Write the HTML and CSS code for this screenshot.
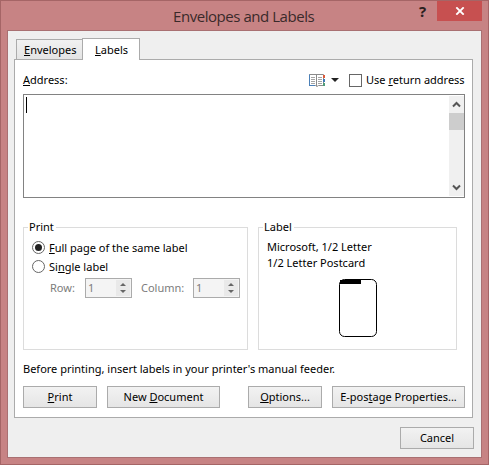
FILE: index.html
```
<!DOCTYPE html>
<html lang="en">
<head>
    <meta charset="UTF-8">
    <meta name="viewport" content="width=device-width, initial-scale=1.0">
    <link rel="stylesheet" href="styles.css">
    <title>Envelopes and Labels</title>
</head>
<body>
    <div class="window">
        <div class="titlebar">
            <span class="title">Envelopes and Labels</span>
            <span class="help">?</span>
            <div class="close">
                <svg width="10" height="8" viewBox="0 0 10 8"><path d="M1.3 0.3L8.7 7.7M8.7 0.3L1.3 7.7" stroke="#fff" stroke-width="1.8" fill="none"/></svg>
            </div>
        </div>

        <div class="client">
            <div class="tabs">
                <div class="tab"><span><u>E</u>nvelopes</span></div>
                <div class="tab active"><span><u>L</u>abels</span></div>
            </div>

            <div class="panel">
                <div class="address-row">
                    <span class="address-label"><u>A</u>ddress:</span>
                    <svg class="book" width="17" height="13" viewBox="0 0 17 13">
                        <path d="M0.5 0.5H14.5V11.5H9.5L8 12.5L6.5 11.5H0.5Z" fill="#fff" stroke="#8b8b8b"/>
                        <path d="M0.5 12V0.5M0 11.5H6" stroke="#4a80b8" fill="none"/>
                        <path d="M7.5 1V12" stroke="#8b8b8b"/>
                        <path d="M2 3.5H6M2 5.5H6M2 7.5H6M2 9.5H6M9 3.5H13M9 5.5H13M9 7.5H13M9 9.5H13" stroke="#a5a5a5"/>
                        <path d="M14 1H16V4H14Z" fill="#dc5b3b"/>
                        <path d="M14 5H16V8H14Z" fill="#3f78b5"/>
                        <path d="M14 9H16V12H14Z" fill="#4f9d78"/>
                    </svg>
                    <svg class="drop" width="8" height="4" viewBox="0 0 8 4"><path d="M0 0H8L4 4Z" fill="#222"/></svg>
                    <span class="checkbox"></span>
                    <span class="return-label">Use <u>r</u>eturn address</span>
                </div>

                <div class="address-box">
                    <div class="caret"></div>
                    <div class="scrollbar">
                        <svg width="15" height="17" viewBox="0 0 15 17"><path d="M4 10.5L7.5 7L11 10.5" stroke="#555" stroke-width="2" fill="none"/></svg>
                        <div class="thumb"></div>
                        <svg class="down" width="15" height="17" viewBox="0 0 15 17"><path d="M4 6.5L7.5 10L11 6.5" stroke="#555" stroke-width="2" fill="none"/></svg>
                    </div>
                </div>

                <div class="groups">
                    <fieldset class="group print-group">
                        <legend>Print</legend>
                        <div class="radio-row">
                            <span class="radio checked"></span>
                            <span class="full-label"><u>F</u>ull page of the same label</span>
                        </div>
                        <div class="radio-row">
                            <span class="radio"></span>
                            <span class="single-label">Si<u>n</u>gle label</span>
                        </div>
                        <div class="spin-row">
                            <span class="row-label">Row:</span>
                            <div class="spinner">
                                <span>1</span>
                                <div class="arrows">
                                    <svg width="14" height="8" viewBox="0 0 14 8"><path d="M4 6L7 3L10 6Z" fill="#666"/></svg>
                                    <svg width="14" height="8" viewBox="0 0 14 8"><path d="M4 2L7 5L10 2Z" fill="#666"/></svg>
                                </div>
                            </div>
                            <span class="column-label">Column:</span>
                            <div class="spinner">
                                <span>1</span>
                                <div class="arrows">
                                    <svg width="14" height="8" viewBox="0 0 14 8"><path d="M4 6L7 3L10 6Z" fill="#666"/></svg>
                                    <svg width="14" height="8" viewBox="0 0 14 8"><path d="M4 2L7 5L10 2Z" fill="#666"/></svg>
                                </div>
                            </div>
                        </div>
                    </fieldset>

                    <fieldset class="group label-group">
                        <legend>Label</legend>
                        <p class="vendor">Microsoft, 1/2 Letter</p>
                        <p class="product">1/2 Letter Postcard</p>
                        <svg class="preview" width="38" height="58" viewBox="0 0 38 58">
                            <rect x="0.5" y="0.5" width="37" height="57" rx="5" fill="#fff" stroke="#000"/>
                            <path d="M1 1H22V5H1Z" fill="#000"/>
                        </svg>
                    </fieldset>
                </div>

                <p class="hint">Before printing, insert labels in your printer's manual feeder.</p>

                <div class="buttons">
                    <button class="btn"><u>P</u>rint</button>
                    <button class="btn new-doc">New <u>D</u>ocument</button>
                    <button class="btn options"><u>O</u>ptions...</button>
                    <button class="btn postage">E-pos<u>t</u>age Properties...</button>
                </div>
            </div>

            <div class="footer">
                <button class="btn">Cancel</button>
            </div>
        </div>
    </div>
</body>
</html>
```
FILE: styles.css
```
* {
    box-sizing: border-box;
}

body {
    margin: 0;
    font-family: "Noto Sans", "Open Sans", sans-serif;
    font-size: 11px;
    line-height: 16px;
    color: #000;
}

p {
    margin: 0;
}

u {
    text-decoration-thickness: 1px;
    text-underline-offset: 1px;
    text-decoration-skip-ink: none;
}

span,
p,
legend,
button {
    white-space: nowrap;
}

svg {
    display: block;
    flex: none;
}

.window {
    width: 489px;
    height: 465px;
    padding: 0 6px 6px;
    background-color: #c78384;
    border: 1px solid #a56566;
}

.titlebar {
    display: flex;
    height: 29px;
    color: #3a2a2a;
}

.title {
    width: 144px;
    margin-left: 166px;
    padding-top: 4px;
    font-family: "Open Sans", "Noto Sans", sans-serif;
    font-size: 15px;
    line-height: 22px;
    letter-spacing: -0.45px;
}

.help {
    width: 10px;
    margin-left: 102px;
    font-size: 15px;
    font-weight: bold;
    line-height: 20px;
    color: #2b1f1f;
}

.close {
    display: flex;
    align-items: center;
    justify-content: center;
    width: 45px;
    height: 20px;
    margin-left: 8px;
    background-color: #c75050;
}

.client {
    height: 428px;
    padding: 6px 8px 0 6px;
    background-color: #efefef;
    border: 1px solid #a97072;
}

.tabs {
    display: flex;
    align-items: flex-end;
    height: 22px;
    padding-left: 2px;
}

.tab {
    width: 66px;
    height: 20px;
    padding: 2px 0 0 7px;
    background: linear-gradient(#f1f1f1, #e4e4e4);
    border: 1px solid #ababab;
    border-width: 1px 0 0 1px;
}

.tab.active {
    width: 58px;
    height: 22px;
    margin-bottom: -1px;
    padding: 3px 0 0 12px;
    background: #fff;
    border-width: 1px 1px 0;
    z-index: 1;
}

.panel {
    height: 359px;
    padding: 12px 7px 0 8px;
    background-color: #fff;
    border: 1px solid #ababab;
}

.address-row {
    display: flex;
    align-items: center;
    height: 16px;
}

.address-label {
    flex: none;
    width: 286px;
}

.drop {
    margin-left: 5px;
}

.checkbox {
    flex: none;
    width: 13px;
    height: 13px;
    margin: 0 4px 0 10px;
    border: 1px solid #666;
}

.address-box {
    display: flex;
    justify-content: space-between;
    height: 104px;
    margin-top: 6px;
    padding: 1px 0 1px 1px;
    border: 1px solid #828282;
}

.caret {
    width: 1px;
    height: 16px;
    margin: 1px 0 0 1px;
    background-color: #000;
}

.scrollbar {
    display: flex;
    flex-direction: column;
    width: 15px;
    background-color: #f0f0f0;
}

.thumb {
    height: 17px;
    background-color: #cdcdcd;
}

.down {
    margin-top: auto;
}

.groups {
    display: flex;
    gap: 10px;
    margin-top: 21px;
}

.group {
    height: 131px;
    margin: 0;
    padding: 0;
    border: 1px solid #dcdcdc;
}

.print-group {
    width: 225px;
}

.label-group {
    width: 199px;
}

legend {
    height: 16px;
    margin-left: 4px;
    padding: 0 2px 0 1px;
}

.radio-row {
    display: flex;
    align-items: center;
    gap: 4px;
    height: 19px;
    padding-left: 8px;
}

.print-group .radio-row:nth-of-type(1) {
    margin-top: 3px;
}

.radio {
    display: flex;
    align-items: center;
    justify-content: center;
    width: 13px;
    height: 13px;
    border: 1px solid #666;
    border-radius: 50%;
}

.radio.checked::after {
    content: "";
    width: 7px;
    height: 7px;
    background-color: #222;
    border-radius: 50%;
}

.spin-row {
    display: flex;
    align-items: center;
    height: 20px;
    margin-top: 2px;
    padding-left: 26px;
    color: #7c7c7c;
}

.row-label {
    width: 35px;
}

.column-label {
    width: 52px;
    margin-left: 9px;
}

.spinner {
    display: flex;
    align-items: center;
    justify-content: space-between;
    width: 47px;
    height: 20px;
    padding: 0 1px 0 2px;
    background-color: #f4f4f4;
    border: 1px solid #ababab;
}

.arrows {
    display: flex;
    flex-direction: column;
    background-color: #e9e9e9;
}

.vendor,
.product {
    padding-left: 8px;
}

.vendor {
    margin-top: 4px;
}

.preview {
    margin: 8px 0 0 80px;
}

.hint {
    margin-top: 11px;
}

.buttons {
    display: flex;
    height: 22px;
    margin-top: 9px;
}

.btn {
    width: 74px;
    height: 22px;
    padding: 0;
    font-family: inherit;
    font-size: 11px;
    line-height: 16px;
    color: #000;
    background: linear-gradient(#f2f2f2, #e5e5e5);
    border: 1px solid #ababab;
}

.new-doc {
    width: 113px;
    margin-left: 10px;
}

.options {
    margin-left: 28px;
}

.postage {
    width: 133px;
    margin-left: 10px;
}

.footer {
    display: flex;
    justify-content: flex-end;
    margin: 9px -1px 0 0;
}
```
